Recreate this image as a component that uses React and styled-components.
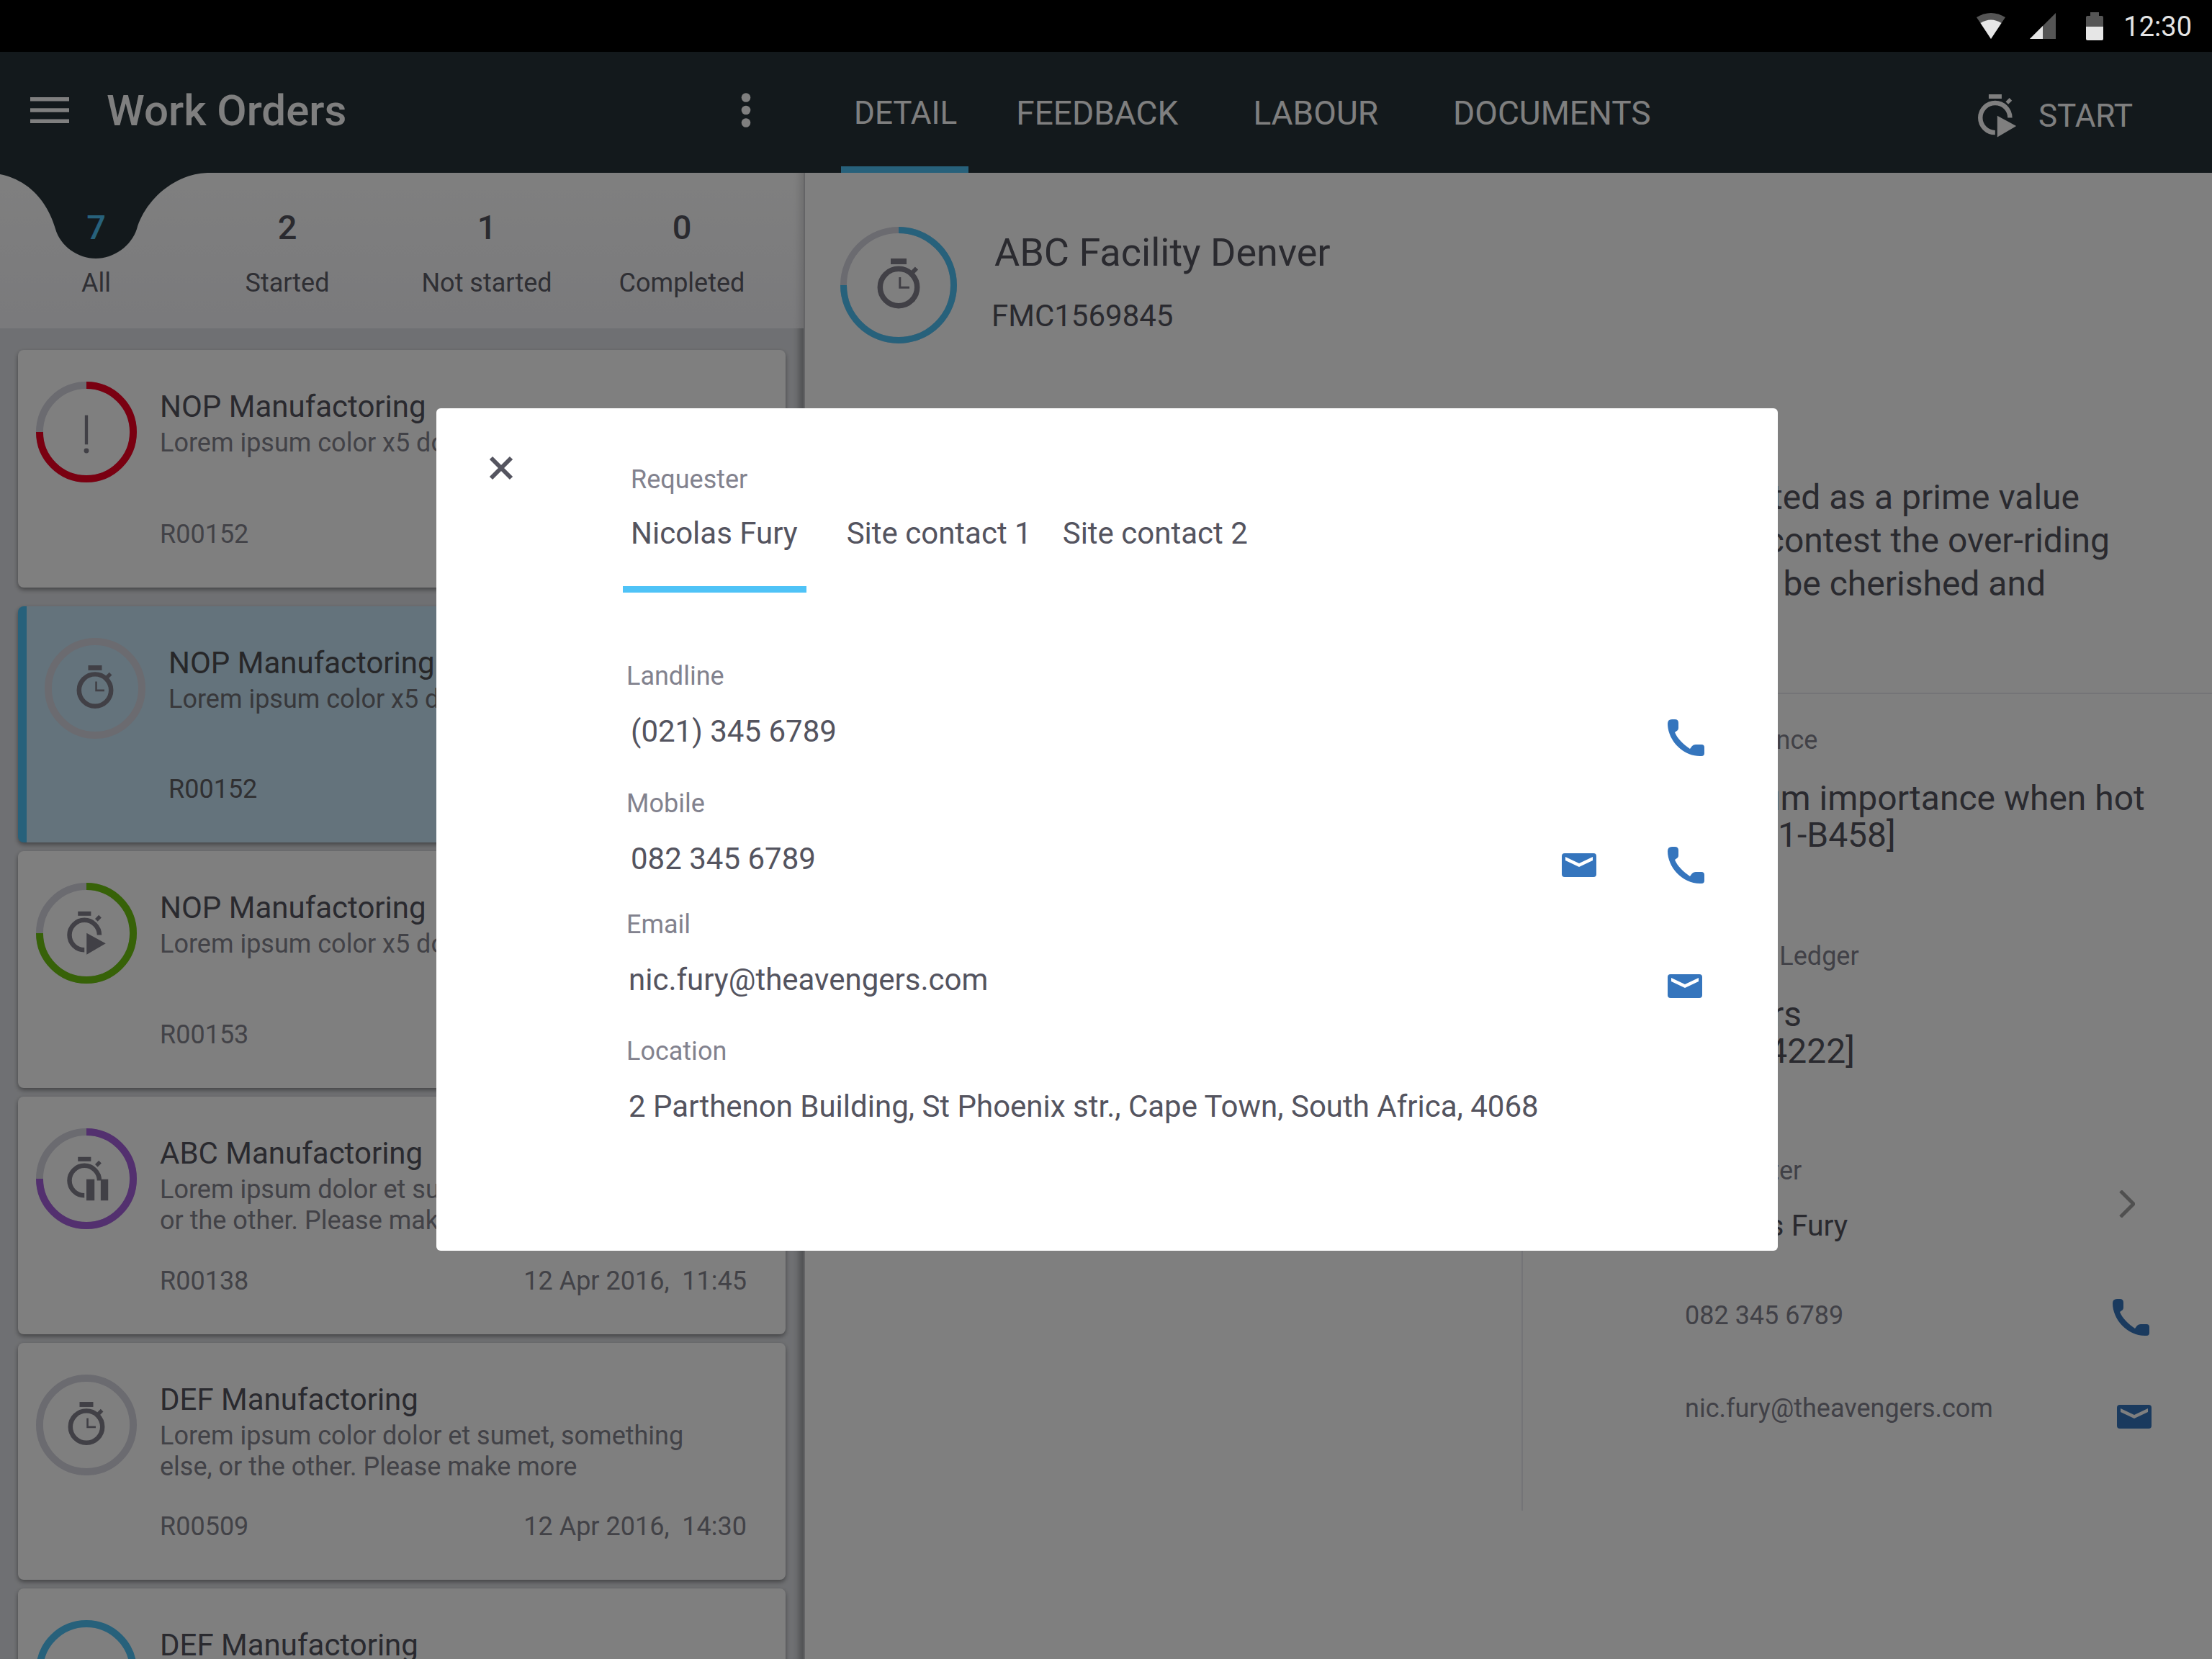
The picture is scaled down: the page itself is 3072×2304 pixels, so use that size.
import React from "react";
import styled, { createGlobalStyle } from "styled-components";

const GlobalStyle = createGlobalStyle`
  html, body {
    margin: 0;
    padding: 0;
    background: #fff;
    font-family: Roboto, "Open Sans", sans-serif;
  }
`;

const Page = styled.div`
  position: relative;
  width: 3072px;
  height: 2304px;
  overflow: hidden;
  display: flex;
  flex-direction: column;
`;

// STATUS BAR
const StatusBar = styled.div`
  position: relative;
  z-index: 3;
  height: 72px;
  flex: none;
  background: #000;
  display: flex;
  align-items: center;
  justify-content: flex-end;
  padding-right: 28px;
`;

const StatusIcon = styled.svg`
  display: block;
  margin-right: ${(props) => props.$gap}px;
`;

const Clock = styled.span`
  padding-top: 3px;
  font-size: 38px;
  color: #e4e4e4;
  line-height: 69px;
`;

// APP BAR
const AppBar = styled.div`
  height: 168px;
  flex: none;
  display: flex;
  background: #263238;
`;

const LeftBar = styled.div`
  width: 1118px;
  flex: none;
  display: flex;
  align-items: center;
  padding: 0 75px 6px 42px;
  box-sizing: border-box;
`;

const Title = styled.h1`
  flex: 1;
  margin: 0 0 0 52px;
  font-size: 60px;
  font-weight: 500;
  color: #fff;
`;

const RightBar = styled.div`
  flex: 1;
  min-width: 0;
  display: flex;
  align-items: stretch;
  padding: 0 110px 0 50px;
`;

const Tab = styled.div`
  position: relative;
  display: flex;
  align-items: center;
  padding: 2px 16px 0 18px;
  margin-right: ${(props) => props.$gap}px;
  font-size: ${(props) => props.$size || 46}px;
  color: #fff;

  ${(props) =>
    props.$active &&
    `&::after {
      content: "";
      position: absolute;
      left: 0;
      right: 0;
      bottom: 0;
      height: 9px;
      background: #4fc3f7;
    }`}
`;

const StartButton = styled.div`
  margin-left: auto;
  display: flex;
  align-items: center;
  gap: 30px;
  padding-top: 10px;
  font-size: 44px;
  color: #fff;
`;

// MAIN
const Main = styled.div`
  flex: 1;
  display: flex;
  min-height: 0;
`;

const LeftPanel = styled.div`
  width: 1118px;
  flex: none;
  display: flex;
  flex-direction: column;
  background: #dfe1e6;
  box-shadow: inset -14px 0 10px -8px rgba(0, 0, 0, 0.3);
  border-right: 2px solid #c8c8cc;
  box-sizing: border-box;
`;

const Stats = styled.div`
  position: relative;
  height: 216px;
  flex: none;
  background: linear-gradient(#fff, #f4f4f8);
  box-shadow: inset -14px 0 10px -8px rgba(0, 0, 0, 0.12);
`;

const Notch = styled.svg`
  position: absolute;
  left: 0;
  top: 0;
`;

const StatColumns = styled.div`
  position: relative;
  height: 100%;
  display: grid;
  grid-template-columns: 267px 264px 290px 252px;
`;

const Stat = styled.div`
  display: flex;
  flex-direction: column;
  align-items: center;
  padding-top: 49px;
`;

const StatNumber = styled.div`
  font-size: 47px;
  font-weight: 500;
  line-height: 54px;
  color: ${(props) => (props.$active ? "#4fc3f7" : "#54545f")};
`;

const StatLabel = styled.div`
  margin-top: 28px;
  font-size: 36px;
  line-height: 44px;
  color: #5e5e68;
`;

const CardList = styled.div`
  flex: 1;
  min-height: 0;
  overflow: hidden;
  padding: 30px 25px 0 25px;
`;

const Card = styled.div`
  height: ${(props) => (props.$selected ? 328 : 329.5)}px;
  box-sizing: border-box;
  display: flex;
  padding: 0 54px 0 25px;
  border-radius: 8px;
  border-left: ${(props) => (props.$selected ? "12px solid #4fc3f7" : "0")};
  background: ${(props) => (props.$selected ? "#c8e6f8" : "#fff")};
  box-shadow: 0 3px 6px rgba(0, 0, 0, 0.4);
  margin-top: ${(props) => (props.$selected ? 26 : 12)}px;

  &:first-child {
    margin-top: 0;
  }
`;

const RingSvg = styled.svg`
  display: block;
  flex: none;
  margin-top: ${(props) => props.$top || 0}px;
`;

const CardBody = styled.div`
  flex: 1;
  min-width: 0;
  display: flex;
  flex-direction: column;
  margin-left: 32px;
  padding: 54px 0 52px;
`;

const CardTitle = styled.div`
  font-size: 42px;
  line-height: 50px;
  color: ${(props) => (props.$selected ? "#4e4e52" : "#54545f")};
  white-space: nowrap;
`;

const CardText = styled.div`
  margin-top: 4px;
  padding-right: 60px;
  font-size: 36px;
  line-height: 43px;
  color: ${(props) => (props.$selected ? "#707076" : "#85858f")};
`;

const CardFoot = styled.div`
  margin-top: auto;
  display: flex;
  justify-content: space-between;
  font-size: 36px;
  line-height: 44px;
  color: ${(props) => (props.$selected ? "#606064" : "#85858f")};
  white-space: pre;
`;

const RightPanel = styled.div`
  flex: 1;
  min-width: 0;
  display: flex;
  flex-direction: column;
  background: #fff;
`;

const DetailHead = styled.div`
  display: flex;
  padding: 75px 0 0 49px;
`;

const DetailTitles = styled.div`
  margin-left: 48px;
  padding-top: 6px;
`;

const DetailName = styled.div`
  font-size: 54px;
  line-height: 60px;
  margin-left: 4px;
  color: #54545f;
`;

const DetailCode = styled.div`
  margin-top: 33px;
  font-size: 42px;
  line-height: 50px;
  color: #54545f;
`;

const Description = styled.div`
  width: 1550px;
  margin: 184px 0 0 262px;
  padding-bottom: 121px;
  display: flex;
  flex-direction: column;
  align-items: flex-end;
  font-size: 48px;
  line-height: 60px;
  color: #54545f;
  white-space: nowrap;
`;

const DescriptionLine = styled.div`
  margin-right: ${(props) => props.$inset || 0}px;
`;

const Rule = styled.div`
  height: 2px;
  flex: none;
  background: #e8e8ee;
`;

const Columns = styled.div`
  display: flex;
  height: 1134px;
`;

const LeftColumn = styled.div`
  width: 995px;
  flex: none;
  border-right: 2px solid #e8e8ee;
`;

const InfoColumn = styled.div`
  flex: 1;
  min-width: 0;
  padding: 42px 84px 0 225px;
`;

const InfoLabel = styled.div`
  font-size: 36px;
  line-height: 44px;
  color: #82828e;
`;

const InfoValue = styled.div`
  margin-top: ${(props) => props.$top}px;
  margin-bottom: ${(props) => props.$bottom || 0}px;
  font-size: ${(props) => props.$size || 48}px;
  line-height: 51px;
  color: #54545f;
  white-space: nowrap;
`;

const OwnerRow = styled.div`
  display: flex;
  justify-content: space-between;
  align-items: center;
  padding-right: 23px;
`;

const Chevron = styled.svg`
  display: block;
  margin-top: 12px;
`;

const ContactRow = styled.div`
  margin-top: ${(props) => props.$top}px;
  height: 44px;
  display: flex;
  justify-content: space-between;
  align-items: center;
  font-size: 36px;
  color: #82828e;
`;

const ContactIcon = styled.div`
  margin-top: ${(props) => props.$drop || 0}px;
  margin-right: ${(props) => props.$right || 0}px;
`;

// DIALOG
const Scrim = styled.div`
  position: absolute;
  left: 0;
  right: 0;
  top: 72px;
  bottom: 0;
  z-index: 1;
  background: rgba(0, 0, 0, 0.5);
`;

const Dialog = styled.div`
  position: absolute;
  z-index: 2;
  left: 606px;
  top: 567px;
  width: 1863px;
  height: 1170px;
  box-sizing: border-box;
  display: flex;
  background: #fff;
  border-radius: 6px;
`;

const CloseColumn = styled.div`
  width: 264px;
  flex: none;
  padding: 66px 0 0 73px;
  box-sizing: border-box;
`;

const DialogBody = styled.div`
  flex: 1;
  padding: 77px 102px 0 0;
`;

const RequesterLabel = styled.div`
  padding-left: 6px;
  font-size: 36px;
  line-height: 44px;
  color: #82828e;
`;

const ContactTabs = styled.div`
  display: flex;
  margin: 27px 0 94px -5px;
`;

const ContactTab = styled.div`
  position: relative;
  height: 108px;
  box-sizing: border-box;
  padding: 0 12px 0 11px;
  margin-right: ${(props) => props.$gap || 0}px;
  font-size: 42px;
  line-height: 52px;
  color: #54545f;

  ${(props) =>
    props.$active &&
    `&::after {
      content: "";
      position: absolute;
      left: 0;
      right: 0;
      bottom: 0;
      height: 9px;
      background: #4fc3f7;
    }`}
`;

const Field = styled.div`
  margin-bottom: ${(props) => props.$gap || 0}px;
`;

const FieldLabel = styled.div`
  font-size: 36px;
  line-height: 44px;
  color: #82828e;
`;

const FieldRow = styled.div`
  margin-top: 28px;
  height: 52px;
  display: flex;
  align-items: center;
  justify-content: space-between;
  padding-left: ${(props) => props.$indent}px;
  font-size: 42px;
  color: #54545f;
`;

const FieldIcons = styled.div`
  display: flex;
  align-items: center;
  margin-top: 18px;
`;

const IconSlot = styled.div`
  width: 51px;
  margin-left: ${(props) => props.$left || 0}px;
`;

const PhoneSvg = styled.svg`
  display: block;
`;

const MailSvg = styled.svg`
  display: block;
`;

const PhoneIcon = ({ color = "#3575bd" }) => (
  <PhoneSvg width="51" height="51" viewBox="0 0 51 51">
    <path
      fill={color}
      d="M0 6Q0 0 6 0H10Q15 0 15 5V12Q15 14 13.5 15.5L10 18C13 26 22 35 31 41L34 37Q36 35 39 35H47Q51 35 51 39V47Q51 51 47 51H45C20 51 0 28 0 6Z"
    />
  </PhoneSvg>
);

const MailIcon = ({ color = "#3575bd" }) => (
  <MailSvg width="48" height="33" viewBox="0 0 48 33">
    <rect width="48" height="33" rx="4" fill={color} />
    <polygon points="5,5 24,14 43,5 43,10 24,19 5,10" fill="#fff" />
  </MailSvg>
);

const GLYPH = "#82808c";

// glyphs are drawn in the coordinates of a 162 wide ring
const WatchGlyph = ({ color }) => (
  <g fill="none" stroke={color}>
    <rect x="70" y="44" width="22" height="8" fill={color} stroke="none" />
    <circle cx="81" cy="84" r="25.7" strokeWidth="7.5" />
    <path d="M100 63.5L106 57.5" strokeWidth="6" />
    <path d="M82.8 70V84.3H96" strokeWidth="3" />
  </g>
);

const ActiveArc = ({ color }) => (
  <g fill="none" stroke={color}>
    <rect x="67.4" y="46" width="21" height="7" fill={color} stroke="none" />
    <path d="M101.8 84A24 24 0 1 0 77.8 108" strokeWidth="7.5" />
    <path d="M97 60L103 54" strokeWidth="6" />
  </g>
);

const PlayGlyph = ({ color }) => (
  <g>
    <ActiveArc color={color} />
    <polygon points="81.3,80.8 112,97.4 81.3,115.3" fill={color} />
  </g>
);

const PauseGlyph = ({ color }) => (
  <g>
    <ActiveArc color={color} />
    <path d="M81 82H94V116H81ZM104 82H116V116H104Z" fill={color} />
  </g>
);

const AlertGlyph = ({ color }) => (
  <g fill={color}>
    <rect x="78.5" y="54" width="5" height="47" />
    <circle cx="81" cy="111" r="4" />
  </g>
);

const glyphs = {
  watch: WatchGlyph,
  play: PlayGlyph,
  pause: PauseGlyph,
  alert: AlertGlyph,
};

const Ring = ({ size, top, progress, track = "#d6d6e0", icon, stroke = 9 }) => {
  const Glyph = glyphs[icon];
  const r = 81 - stroke / 2;
  return (
    <RingSvg $top={top} width={size} height={size} viewBox="0 0 162 162">
      <circle cx="81" cy="81" r={r} fill="none" stroke={track} strokeWidth={stroke} />
      {progress && (
        <path
          d={`M81 ${81 - r}A${r} ${r} 0 1 1 ${81 - r} 81`}
          fill="none"
          stroke={progress}
          strokeWidth={stroke}
        />
      )}
      {Glyph && <Glyph color={GLYPH} />}
    </RingSvg>
  );
};

const orders = [
  {
    name: "NOP Manufactoring",
    text: "Lorem ipsum color x5 dolor",
    code: "R00152",
    date: "12 Apr 2016,  09:30",
    ring: "#f40022",
    icon: "alert",
  },
  {
    name: "NOP Manufactoring",
    text: "Lorem ipsum color x5 dolor",
    code: "R00152",
    date: "12 Apr 2016,  10:15",
    icon: "watch",
    selected: true,
  },
  {
    name: "NOP Manufactoring",
    text: "Lorem ipsum color x5 dolor",
    code: "R00153",
    date: "12 Apr 2016,  10:45",
    ring: "#6ec410",
    icon: "play",
  },
  {
    name: "ABC Manufactoring",
    text: "Lorem ipsum dolor et sumet, something else, or the other. Please make more",
    code: "R00138",
    date: "12 Apr 2016,  11:45",
    ring: "#a660de",
    icon: "pause",
  },
  {
    name: "DEF Manufactoring",
    text: "Lorem ipsum color dolor et sumet, something else, or the other. Please make more",
    code: "R00509",
    date: "12 Apr 2016,  14:30",
    icon: "watch",
  },
  {
    name: "DEF Manufactoring",
    text: "Lorem ipsum color dolor et sumet, something else, or the other. Please make more",
    code: "R00511",
    date: "12 Apr 2016,  15:00",
    track: "#4fc3f7",
  },
];

const stats = [
  { count: 7, label: "All", active: true },
  { count: 2, label: "Started" },
  { count: 1, label: "Not started" },
  { count: 0, label: "Completed" },
];

const App = () => {
  return (
    <Page>
      <GlobalStyle />
      <StatusBar>
        <StatusIcon $gap={34} width="40" height="36" viewBox="0 0 40 36">
          <path d="M20 36L0 6Q20 -6 40 6Z" fill="#555" />
          <path d="M20 36L5.5 14Q20 5 34.5 14Z" fill="#e6e6e6" />
        </StatusIcon>
        <StatusIcon $gap={42} width="36" height="36" viewBox="0 0 36 36">
          <path d="M0 36L36 0V36Z" fill="#555" />
          <path d="M0 36L18 18V36Z" fill="#e6e6e6" />
        </StatusIcon>
        <StatusIcon $gap={28} width="24" height="39" viewBox="0 0 24 39">
          <path d="M6 0H18V5H22Q24 5 24 7V20H0V7Q0 5 2 5H6Z" fill="#555" />
          <path d="M0 20H24V37Q24 39 22 39H2Q0 39 0 37Z" fill="#e6e6e6" />
        </StatusIcon>
        <Clock>12:30</Clock>
      </StatusBar>

      <AppBar>
        <LeftBar>
          <svg width="54" height="36" viewBox="0 0 54 36" fill="#fff">
            <rect y="0" width="54" height="5.5" />
            <rect y="15.3" width="54" height="5.5" />
            <rect y="30.5" width="54" height="5.5" />
          </svg>
          <Title>Work Orders</Title>
          <svg width="14" height="48" viewBox="0 0 14 48" fill="#fff">
            <circle cx="7" cy="6.5" r="6.3" />
            <circle cx="7" cy="24" r="6.3" />
            <circle cx="7" cy="41.5" r="6.3" />
          </svg>
        </LeftBar>
        <RightBar>
          <Tab $active $size={44} $gap={48}>DETAIL</Tab>
          <Tab $gap={70}>FEEDBACK</Tab>
          <Tab $gap={70}>LABOUR</Tab>
          <Tab $gap={0}>DOCUMENTS</Tab>
          <StartButton>
            <svg width="54" height="60" viewBox="50 46 63 70">
              <PlayGlyph color="#fff" />
            </svg>
            START
          </StartButton>
        </RightBar>
      </AppBar>

      <Main>
        <LeftPanel>
          <Stats>
            <Notch width="300" height="122" viewBox="0 0 300 122">
              <path
                d="M0 0V2C40 10 66 40 77 78C84 102 108 119 133 119C158 119 182 102 190 78C200 42 238 2 288 0Z"
                fill="#263238"
              />
            </Notch>
            <StatColumns>
              {stats.map((stat) => (
                <Stat key={stat.label}>
                  <StatNumber $active={stat.active}>{stat.count}</StatNumber>
                  <StatLabel>{stat.label}</StatLabel>
                </Stat>
              ))}
            </StatColumns>
          </Stats>
          <CardList>
            {orders.map((order, index) => (
              <Card key={index} $selected={order.selected}>
                <Ring
                  size={140}
                  top={44}
                  stroke={11.5}
                  progress={order.ring}
                  track={order.track}
                  icon={order.icon}
                />
                <CardBody>
                  <CardTitle $selected={order.selected}>{order.name}</CardTitle>
                  <CardText $selected={order.selected}>{order.text}</CardText>
                  <CardFoot $selected={order.selected}>
                    <span>{order.code}</span>
                    <span>{order.date}</span>
                  </CardFoot>
                </CardBody>
              </Card>
            ))}
          </CardList>
        </LeftPanel>

        <RightPanel>
          <DetailHead>
            <Ring size={162} progress="#4fc3f7" icon="watch" />
            <DetailTitles>
              <DetailName>ABC Facility Denver</DetailName>
              <DetailCode>FMC1569845</DetailCode>
            </DetailTitles>
          </DetailHead>
          <Description>
            <DescriptionLine $inset={42}>
              The safety of our staff on site must be treated as a prime value
            </DescriptionLine>
            <DescriptionLine>
              and no manager or contractor should contest the over-riding
            </DescriptionLine>
            <DescriptionLine $inset={89}>
              need for it, which has to be cherished and
            </DescriptionLine>
          </Description>
          <Rule />
          <Columns>
            <LeftColumn />
            <InfoColumn>
              <InfoLabel>Importance</InfoLabel>
              <InfoValue $top={33} $bottom={121}>
                Medium importance when hot
                <br />
                [AC411-B458]
              </InfoValue>
              <InfoLabel>General Ledger</InfoLabel>
              <InfoValue $top={33} $bottom={119}>
                Owners
                <br />
                [GR-24222]
              </InfoValue>
              <OwnerRow>
                <div>
                  <InfoLabel>Requester</InfoLabel>
                  <InfoValue $top={29} $size={41}>Nicolas Fury</InfoValue>
                </div>
                <Chevron width="22" height="38" viewBox="0 0 22 38">
                  <path d="M2 1L20 19L2 37" fill="none" stroke="#a0a0a0" strokeWidth="5" />
                </Chevron>
              </OwnerRow>
              <ContactRow $top={77}>
                082 345 6789
                <ContactIcon $right={3} $drop={4}>
                  <PhoneIcon />
                </ContactIcon>
              </ContactRow>
              <ContactRow $top={85}>
                nic.fury@theavengers.com
                <ContactIcon $drop={22}>
                  <MailIcon />
                </ContactIcon>
              </ContactRow>
            </InfoColumn>
          </Columns>
        </RightPanel>
      </Main>

      <Scrim />

      <Dialog>
        <CloseColumn>
          <svg width="34" height="34" viewBox="0 0 34 34">
            <path d="M3 3L31 31M31 3L3 31" stroke="#54545f" strokeWidth="6" fill="none" />
          </svg>
        </CloseColumn>
        <DialogBody>
          <RequesterLabel>Requester</RequesterLabel>
          <ContactTabs>
            <ContactTab $active $gap={45}>Nicolas Fury</ContactTab>
            <ContactTab $gap={20}>Site contact 1</ContactTab>
            <ContactTab>Site contact 2</ContactTab>
          </ContactTabs>
          <Field $gap={53}>
            <FieldLabel>Landline</FieldLabel>
            <FieldRow $indent={6}>
              (021) 345 6789
              <FieldIcons>
                <IconSlot>
                  <PhoneIcon />
                </IconSlot>
              </FieldIcons>
            </FieldRow>
          </Field>
          <Field $gap={44}>
            <FieldLabel>Mobile</FieldLabel>
            <FieldRow $indent={6}>
              082 345 6789
              <FieldIcons>
                <IconSlot>
                  <MailIcon />
                </IconSlot>
                <IconSlot $left={96}>
                  <PhoneIcon />
                </IconSlot>
              </FieldIcons>
            </FieldRow>
          </Field>
          <Field $gap={52}>
            <FieldLabel>Email</FieldLabel>
            <FieldRow $indent={3}>
              nic.fury@theavengers.com
              <FieldIcons>
                <IconSlot>
                  <MailIcon />
                </IconSlot>
              </FieldIcons>
            </FieldRow>
          </Field>
          <Field>
            <FieldLabel>Location</FieldLabel>
            <FieldRow $indent={3}>
              2 Parthenon Building, St Phoenix str., Cape Town, South Africa, 4068
            </FieldRow>
          </Field>
        </DialogBody>
      </Dialog>
    </Page>
  );
};

export default App;
